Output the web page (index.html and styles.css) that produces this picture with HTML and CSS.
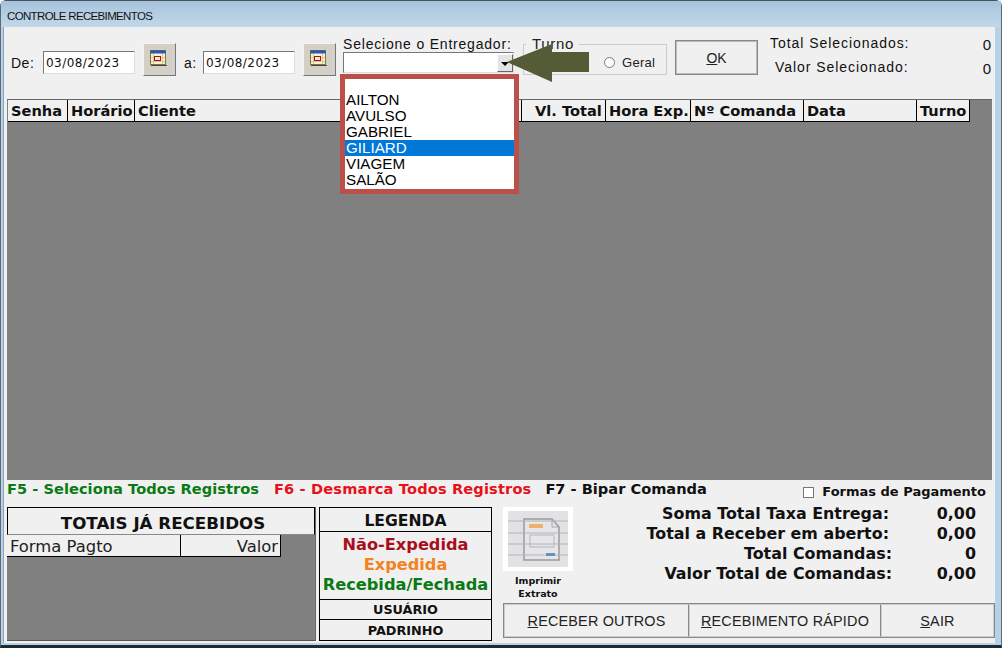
FILE: index.html
```html
<!DOCTYPE html>
<html lang="pt-BR">
<head>
    <meta charset="UTF-8">
    <meta name="viewport" content="width=device-width, initial-scale=1.0">
    <title>Controle Recebimentos</title>
    <link rel="stylesheet" href="styles.css">
</head>
<body>
    <div class="window">
        <div class="titlebar">CONTROLE RECEBIMENTOS</div>
        <div class="content">

            <div class="filters">
                <span class="date-label">De:</span>
                <div class="date-input">03/08/2023</div>
                <button class="cal-btn">
                    <svg width="18" height="17" viewBox="0 0 18 17"><rect x="0.5" y="0.5" width="15" height="14" fill="#f8f2cc" stroke="#77773f"/><rect x="0.5" y="0.5" width="15" height="3" fill="#2a55b8"/><path d="M1 7.5h14M1 11.5h14M3.5 4v10M12.5 4v10" stroke="#d8c890"/><rect x="4.5" y="6.5" width="6" height="4" fill="#f8f2cc" stroke="#c00030"/><path d="M1 15.5h16" stroke="#444"/></svg>
                </button>
                <span class="date-label second">a:</span>
                <div class="date-input">03/08/2023</div>
                <button class="cal-btn">
                    <svg width="18" height="17" viewBox="0 0 18 17"><rect x="0.5" y="0.5" width="15" height="14" fill="#f8f2cc" stroke="#77773f"/><rect x="0.5" y="0.5" width="15" height="3" fill="#2a55b8"/><path d="M1 7.5h14M1 11.5h14M3.5 4v10M12.5 4v10" stroke="#d8c890"/><rect x="4.5" y="6.5" width="6" height="4" fill="#f8f2cc" stroke="#c00030"/><path d="M1 15.5h16" stroke="#444"/></svg>
                </button>

                <div class="courier">
                    <div class="courier-label">Selecione o Entregador:</div>
                    <div class="combo"><span class="combo-btn"><i></i></span></div>
                </div>

                <div class="turno">
                    <span class="turno-title">Turno</span>
                    <span class="radio"></span>
                    <span class="radio-label">Geral</span>
                </div>

                <button class="ok-btn"><u>O</u>K</button>

                <div class="selected">
                    <div class="selected-row"><span>Total Selecionados:</span><b>0</b></div>
                    <div class="selected-row second"><span>Valor Selecionado:</span><b>0</b></div>
                </div>
            </div>

            <!-- lista aberta do combo, por cima da grade -->
            <ul class="dropdown">
                <li class="blank"></li>
                <li>AILTON</li>
                <li>AVULSO</li>
                <li>GABRIEL</li>
                <li class="active">GILIARD</li>
                <li>VIAGEM</li>
                <li>SALÃO</li>
            </ul>
            <svg class="arrow" width="82" height="38" viewBox="0 0 82 38"><path d="M0 18 L45 0 V8 H82 V28 H45 V38 Z" fill="#535c36"/></svg>

            <div class="grid">
                <div class="grid-head">
                    <div class="col c-senha">Senha</div>
                    <div class="col c-hora">Horário</div>
                    <div class="col c-cliente">Cliente</div>
                    <div class="col c-total">Vl. Total</div>
                    <div class="col c-exp">Hora Exp.</div>
                    <div class="col c-comanda">Nº Comanda</div>
                    <div class="col c-data">Data</div>
                    <div class="col c-turno">Turno</div>
                </div>
            </div>

            <div class="shortcuts">
                <span class="key-green">F5 - Seleciona Todos Registros</span>
                <span class="key-red">F6 - Desmarca Todos Registros</span>
                <span class="key-black">F7 - Bipar Comanda</span>
                <label class="payments"><span class="check"></span>Formas de Pagamento</label>
            </div>

            <div class="bottom">
                <div class="received">
                    <div class="received-title">TOTAIS JÁ RECEBIDOS</div>
                    <div class="received-head">
                        <div class="r-forma">Forma Pagto</div>
                        <div class="r-valor">Valor</div>
                    </div>
                </div>

                <div class="legend">
                    <div class="legend-title">LEGENDA</div>
                    <div class="legend-items">
                        <div class="st-red">Não-Expedida</div>
                        <div class="st-orange">Expedida</div>
                        <div class="st-green">Recebida/Fechada</div>
                    </div>
                    <div class="legend-user">USUÁRIO</div>
                    <div class="legend-user last">PADRINHO</div>
                </div>

                <div class="right-side">
                    <div class="right-top">
                        <div class="print">
                            <div class="print-icon">
                                <svg width="60" height="56" viewBox="0 0 60 56">
                                    <rect width="60" height="56" fill="#e2e2e4"/>
                                    <path d="M16 8H44L51 16V49H16Z" fill="#e6e6e8" stroke="#9a9a9c" stroke-width="1.5"/>
                                    <path d="M44 8V16H51" fill="none" stroke="#a8a8aa"/>
                                    <path d="M0 10H60M0 22H60M0 33H60M0 44H60" stroke="#b4b4b6" stroke-width="1.2"/>
                                    <rect x="21" y="13" width="14" height="4" fill="#eeb06a"/>
                                    <rect x="22" y="24" width="24" height="12" fill="none" stroke="#b6b6b8"/>
                                    <rect x="38" y="42" width="9" height="3" fill="#5c94c4"/>
                                </svg>
                            </div>
                            <div class="print-label">Imprimir<br>Extrato</div>
                        </div>
                        <div class="summary">
                            <div class="sum-row"><span>Soma Total Taxa Entrega:</span><b>0,00</b></div>
                            <div class="sum-row"><span>Total a Receber em aberto:</span><b>0,00</b></div>
                            <div class="sum-row shifted"><span>Total Comandas:</span><b>0</b></div>
                            <div class="sum-row shifted"><span>Valor Total de Comandas:</span><b>0,00</b></div>
                        </div>
                    </div>
                    <div class="actions">
                        <button class="act-btn a-outros"><u>R</u>ECEBER OUTROS</button>
                        <button class="act-btn a-rapido"><u>R</u>ECEBIMENTO RÁPIDO</button>
                        <button class="act-btn a-sair"><u>S</u>AIR</button>
                    </div>
                </div>
            </div>

        </div>
    </div>
</body>
</html>
```

FILE: styles.css
```css
* {
    box-sizing: border-box;
}

html, body {
    margin: 0;
    height: 100%;
    overflow: hidden;
    background: #fff;
}

.window {
    width: 1002px;
    height: 648px;
    display: flex;
    flex-direction: column;
    background: #b9d1e6;
    border-top: 1px solid #4a5058;
    border-bottom: 3px solid #1d2b33;
    border-left: 1px solid #5b6a78;
    border-right: 1px solid #5b6a78;
    border-radius: 6px 6px 0 0;
}

.titlebar {
    height: 26px;
    padding: 4px 0 0 6px;
    font: 11.5px/22px "Liberation Sans", Arial, sans-serif;
    letter-spacing: -0.65px;
    color: #111;
    background: linear-gradient(#a6c3dd, #c2d8ea);
}

.content {
    position: relative;
    flex: 1;
    margin: 0 6px 2px 2px;
    padding: 0 0 0 3px;
    background: #f0f0f0;
    border-left: 1px solid #8ea4b6;
    font-family: "DejaVu Sans", Verdana, sans-serif;
}

/* linha de filtros */
.filters {
    height: 72px;
    display: flex;
    align-items: flex-start;
}

.date-label {
    width: 36px;
    margin-top: 27px;
    padding-left: 4px;
    font: 14px/18px "Liberation Sans", Arial, sans-serif;
    letter-spacing: 0.5px;
    color: #111;
}

.date-label.second {
    width: 27px;
    padding-left: 8px;
}

.date-input {
    width: 92px;
    height: 23px;
    margin-top: 24px;
    padding-left: 2px;
    background: #fff;
    border: 1px solid #777;
    border-right-color: #ddd;
    border-bottom-color: #ddd;
    font: 12px/22px "DejaVu Sans", Verdana, sans-serif;
    letter-spacing: 0.45px;
    color: #111;
}

.cal-btn {
    display: flex;
    width: 33px;
    height: 33px;
    margin: 16px 0 0 8px;
    padding: 6px 0 0 6px;
    background: #d4d0c8;
    border: 1px solid;
    border-color: #f4f4f4 #777 #777 #f4f4f4;
}

.courier {
    width: 171px;
    margin: 8px 0 0 7px;
}

.courier-label {
    height: 17px;
    font: 14px/18px "Liberation Sans", Arial, sans-serif;
    letter-spacing: 0.8px;
    color: #111;
    white-space: nowrap;
}

.combo {
    position: relative;
    height: 21px;
    background: #fff;
    border: 1px solid #777;
    border-right-color: #ddd;
    border-bottom-color: #ddd;
}

.combo-btn {
    position: absolute;
    top: 1px;
    right: 0;
    width: 16px;
    height: 18px;
    background: #e4e4e4;
    border: 1px solid;
    border-color: #f8f8f8 #666 #666 #f8f8f8;
}

.combo-btn i {
    position: absolute;
    left: 3px;
    top: 7px;
    border: 4px solid transparent;
    border-top-color: #000;
    border-bottom: 0;
}

.turno {
    position: relative;
    width: 144px;
    height: 31px;
    margin: 17px 0 0 9px;
    border: 1px solid #ccc;
    display: flex;
    align-items: center;
    padding: 6px 0 0 80px;
}

.turno-title {
    position: absolute;
    left: 2px;
    top: -10px;
    padding: 0 5px 0 6px;
    background: #f0f0f0;
    font: 15px/17px "Liberation Sans", Arial, sans-serif;
    letter-spacing: 0.7px;
    color: #222;
}

.radio {
    width: 11px;
    height: 11px;
    border: 1px solid #777;
    border-radius: 50%;
    background: #fff;
}

.radio-label {
    margin-left: 7px;
    font: 13px/16px "Liberation Sans", Arial, sans-serif;
    letter-spacing: 0.3px;
    color: #222;
}

.ok-btn {
    width: 83px;
    height: 35px;
    margin: 13px 0 0 8px;
    padding: 0;
    background: #f0f0f0;
    border: 1px solid #888;
    outline: 1px solid #bbb;
    outline-offset: -2px;
    font: 14px "Liberation Sans", Arial, sans-serif;
    color: #222;
}

.selected {
    width: 222px;
    margin: 8px 0 0 12px;
    font: 14px/17px "Liberation Sans", Arial, sans-serif;
    letter-spacing: 0.95px;
    color: #111;
}

.selected-row {
    height: 24px;
    display: flex;
    justify-content: space-between;
}

.selected-row.second span {
    margin-left: 5px;
}

.selected-row b {
    font-weight: normal;
    font-size: 15px;
    margin-top: 1px;
}

/* lista aberta */
.dropdown {
    position: absolute;
    left: 336px;
    top: 47px;
    width: 179px;
    height: 120px;
    margin: 0;
    padding: 0;
    list-style: none;
    background: #fff;
    border: 5px solid #bd4f4b;
    font: 15.2px/16px "Liberation Sans", Arial, sans-serif;
    color: #000;
    z-index: 2;
}

.dropdown li {
    height: 16px;
    padding-left: 1px;
}

.dropdown .blank {
    height: 13px;
}

.dropdown .active {
    background: #0078d7;
    color: #fff;
}

.arrow {
    position: absolute;
    left: 503px;
    top: 17px;
    z-index: 3;
}

/* grade principal */
.grid {
    width: 985px;
    height: 381px;
    background: #808080;
    border-top: 1px solid #666;
}

.grid-head {
    display: flex;
    height: 22px;
    width: 962px;
    margin-left: 1px;
    background: #f0f0f0;
    border-bottom: 1px solid #000;
}

.col {
    padding-left: 3px;
    border-right: 1px solid #000;
    font: bold 14.6px/22px "DejaVu Sans", Verdana, sans-serif;
    color: #111;
    white-space: nowrap;
    overflow: hidden;
}

.c-senha { width: 60px; }
.c-hora { width: 67px; }
.c-cliente { width: 387px; }
.c-total { width: 84px; padding-left: 13px; }
.c-exp { width: 85px; }
.c-comanda { width: 113px; }
.c-data { width: 113px; }
.c-turno { width: 53px; }

/* atalhos */
.shortcuts {
    position: relative;
    height: 27px;
    display: flex;
    font: bold 14.6px/18px "DejaVu Sans", Verdana, sans-serif;
    white-space: nowrap;
}

.key-green { color: #0a7a14; letter-spacing: 0.03px; }
.key-red { color: #e8101a; margin-left: 15px; letter-spacing: 0.14px; }
.key-black { color: #111; margin-left: 14px; }

.payments {
    display: flex;
    align-items: center;
    margin-left: auto;
    margin-right: 9px;
    height: 22px;
    margin-top: 1px;
    font-size: 13px;
    color: #111;
}

.check {
    width: 11px;
    height: 11px;
    margin-right: 8px;
    background: #fff;
    border: 1px solid #777;
}

/* parte de baixo */
.bottom {
    display: flex;
    height: 134px;
}

.received {
    width: 309px;
    background: #808080;
    border-right: 1px solid #666;
    border-bottom: 1px solid #555;
}

.received-title {
    height: 28px;
    padding-left: 4px;
    background: #f0f0f0;
    border: 1px solid #000;
    border-bottom-color: #888;
    text-align: center;
    font: bold 16.7px/30px "DejaVu Sans", Verdana, sans-serif;
    color: #111;
}

.received-head {
    display: flex;
    width: 274px;
    height: 22px;
    background: #f0f0f0;
    border-bottom: 1px solid #000;
    font: 16.4px/23px "DejaVu Sans", Verdana, sans-serif;
    color: #222;
}

.r-forma {
    width: 174px;
    padding-left: 3px;
    border-right: 1px solid #000;
}

.r-valor {
    flex: 1;
    padding-right: 2px;
    text-align: right;
    border-right: 1px solid #000;
}

.legend {
    width: 173px;
    margin-left: 3px;
    border: 1px solid #000;
    text-align: center;
}

.legend-title {
    height: 24px;
    border-bottom: 1px solid #000;
    font: bold 15.6px/26px "DejaVu Sans", Verdana, sans-serif;
    color: #111;
}

.legend-items {
    height: 68px;
    padding-top: 3px;
    border-bottom: 1px solid #000;
    font: bold 16.2px/20px "DejaVu Sans", Verdana, sans-serif;
    white-space: nowrap;
}

.st-red { color: #a80f1e; }
.st-orange { color: #f58220; }
.st-green { color: #0a7a14; }

.legend-user {
    height: 20px;
    border-bottom: 1px solid #000;
    font: bold 12.8px/20px "DejaVu Sans", Verdana, sans-serif;
    color: #111;
}

.legend-user.last {
    height: 19px;
    border-bottom: 0;
    line-height: 21px;
}

.right-side {
    width: 492px;
    margin-left: 11px;
    display: flex;
    flex-direction: column;
}

.right-top {
    display: flex;
    height: 96px;
}

.print {
    width: 70px;
}

.print-icon {
    width: 70px;
    height: 64px;
    padding: 4px 5px;
    background: #fff;
    font-size: 0;
}

.print-label {
    margin-top: 4px;
    text-align: center;
    font: bold 9.5px/12.5px "DejaVu Sans", Verdana, sans-serif;
    color: #111;
}

.summary {
    flex: 1;
    margin-top: -3px;
    font: bold 15.9px/20px "DejaVu Sans", Verdana, sans-serif;
    color: #111;
}

.sum-row {
    display: flex;
    justify-content: flex-end;
    height: 20px;
    padding-right: 19px;
    white-space: nowrap;
}

.sum-row b {
    width: 87px;
    text-align: right;
}

.sum-row.shifted span {
    margin-right: -3px;
}

.actions {
    display: flex;
    height: 35px;
    border: 1px solid #888;
}

.act-btn {
    height: 33px;
    padding: 0;
    background: #f0f0f0;
    border: 1px solid #ccc;
    border-right-color: #888;
    font: 14.4px "Liberation Sans", Arial, sans-serif;
    letter-spacing: 0.2px;
    color: #222;
}

.a-outros { width: 185px; }
.a-rapido { width: 192px; }
.a-sair { flex: 1; border-right-color: #ccc; }
```
